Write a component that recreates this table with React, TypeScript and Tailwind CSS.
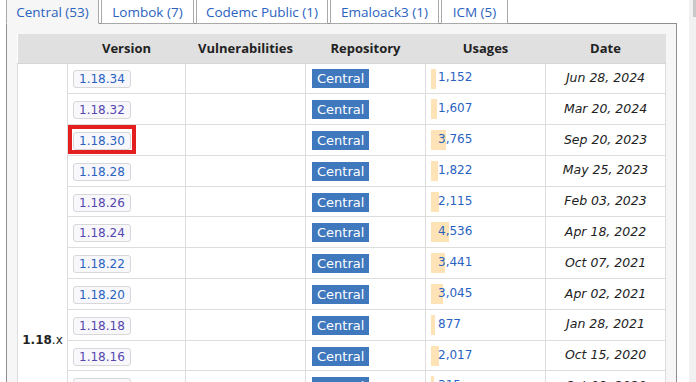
import type { ReactNode } from "react";

interface Release {
  version: string;
  usages: number;
  date: string;
  /** 방문한 링크 (보라색) */
  visited?: boolean;
}

const releases: Release[] = [
  { version: "1.18.34", usages: 1152, date: "Jun 28, 2024" },
  { version: "1.18.32", usages: 1607, date: "Mar 20, 2024", visited: true },
  { version: "1.18.30", usages: 3765, date: "Sep 20, 2023" },
  { version: "1.18.28", usages: 1822, date: "May 25, 2023" },
  { version: "1.18.26", usages: 2115, date: "Feb 03, 2023", visited: true },
  { version: "1.18.24", usages: 4536, date: "Apr 18, 2022", visited: true },
  { version: "1.18.22", usages: 3441, date: "Oct 07, 2021" },
  { version: "1.18.20", usages: 3045, date: "Apr 02, 2021" },
  { version: "1.18.18", usages: 877, date: "Jan 28, 2021", visited: true },
  { version: "1.18.16", usages: 2017, date: "Oct 15, 2020", visited: true },
  { version: "1.18.14", usages: 315, date: "Oct 08, 2020" },
  { version: "1.18.12", usages: 2841, date: "Feb 18, 2020" },
  { version: "1.18.10", usages: 3980, date: "Sep 09, 2019" },
  { version: "1.18.8", usages: 2720, date: "May 06, 2019" },
  { version: "1.18.6", usages: 1304, date: "Feb 12, 2019" },
  { version: "1.18.4", usages: 2260, date: "Nov 20, 2018" },
  { version: "1.18.2", usages: 2511, date: "Aug 07, 2018" },
  { version: "1.18.0", usages: 1188, date: "Jun 05, 2018" },
];

const tabs = [
  { label: "Central (53)", w: "w-[93px]", active: true },
  { label: "Lombok (7)", w: "w-[93px]" },
  { label: "Codemc Public (1)", w: "w-[132px]" },
  { label: "Emaloack3 (1)", w: "w-[109px]" },
  { label: "ICM (5)", w: "w-[67px]" },
];

const fmt = (n: number) => n.toLocaleString("en-US");

function Th({ children, w }: { children?: ReactNode; w: string }) {
  return (
    <th
      className={`${w} h-[29px] border-b border-[#d6d6d6] bg-[#e0e0e0] p-0 text-center align-middle text-[13px] font-bold text-[#222] [font-family:'Open_Sans',sans-serif]`}
    >
      {children}
    </th>
  );
}

export default function App() {
  return (
    <div className="flex h-[382px] w-[696px] overflow-hidden bg-white [font-family:'DejaVu_Sans',Verdana,sans-serif]">
      <div className="w-[684px] pl-[6px]">
        {/* 저장소 탭 */}
        <div className="-mt-[5px] flex gap-[2px]">
          {tabs.map((t) => (
            <div
              key={t.label}
              className={`${t.w} relative z-10 -mb-px flex h-[29px] items-center justify-center rounded-t-[4px] border border-[#a9a9a9] pt-[5px] text-[13.5px] text-[#2a62bf] [font-family:'Open_Sans',sans-serif] ${
                t.active ? "border-b-[#f6f6f6] bg-[#f6f6f6]" : "bg-white"
              }`}
            >
              {t.label}
            </div>
          ))}
        </div>

        <div className="w-[671px] border border-[#8f8f8f] bg-[#f6f6f6] p-[10px]">
          <table className="w-[648px] table-fixed border-collapse bg-white">
            <thead>
              <tr>
                <Th w="w-[50px]" />
                <Th w="w-[118px]">Version</Th>
                <Th w="w-[120px]">Vulnerabilities</Th>
                <Th w="w-[120px]">Repository</Th>
                <Th w="w-[120px]">Usages</Th>
                <Th w="w-[120px]">Date</Th>
              </tr>
            </thead>
            <tbody>
              {releases.map((r, i) => (
                <tr key={r.version} className="h-[30.8px]">
                  {i === 0 && (
                    <td
                      rowSpan={releases.length}
                      className="border border-[#ddd] p-0 text-center align-middle text-[12px] text-[#222]"
                    >
                      <b>1.18</b>.x
                    </td>
                  )}
                  <td className="relative border border-[#ddd] py-0 pl-[5px] pr-0 align-middle">
                    <span
                      className={`inline-block h-[18px] rounded-[3px] border border-[#d8d8d8] bg-[#f8f8fc] px-[5px] text-[12px] leading-[16px] ${
                        r.visited ? "text-[#5446ae]" : "text-[#2a62bf]"
                      }`}
                    >
                      {r.version}
                    </span>
                    {r.version === "1.18.30" && (
                      <span className="absolute left-0 top-0 h-[29px] w-[68px] border-[4px] border-[#e3201f]" />
                    )}
                  </td>
                  <td className="border border-[#ddd] p-0" />
                  <td className="border border-[#ddd] py-0 pl-[6px] pr-0 align-middle">
                    <span className="inline-block h-[19px] bg-[#4078be] px-[5px] text-[13px] leading-[19px] text-white">
                      Central
                    </span>
                  </td>
                  <td className="relative border border-[#ddd] py-0 pl-[12px] pr-0 align-middle">
                    <span
                      className="absolute left-[5px] top-[5px] h-[20px] bg-[#fde3b6]"
                      style={{ width: Math.max(3, r.usages / 250) }}
                    />
                    <span className="relative -top-[2px] text-[12px] text-[#2a62bf]">
                      {fmt(r.usages)}
                    </span>
                  </td>
                  <td className="border border-[#ddd] p-0 text-center align-middle text-[12.5px] italic text-[#222]">
                    {r.date}
                  </td>
                </tr>
              ))}
            </tbody>
          </table>
        </div>
      </div>

      {/* 스크롤바 */}
      <div className="ml-[5px] w-[7px] bg-[#f1f1f1]">
        <div className="ml-[4px] h-[17px] w-[3px] bg-[#c8c8c8]" />
      </div>
    </div>
  );
}
